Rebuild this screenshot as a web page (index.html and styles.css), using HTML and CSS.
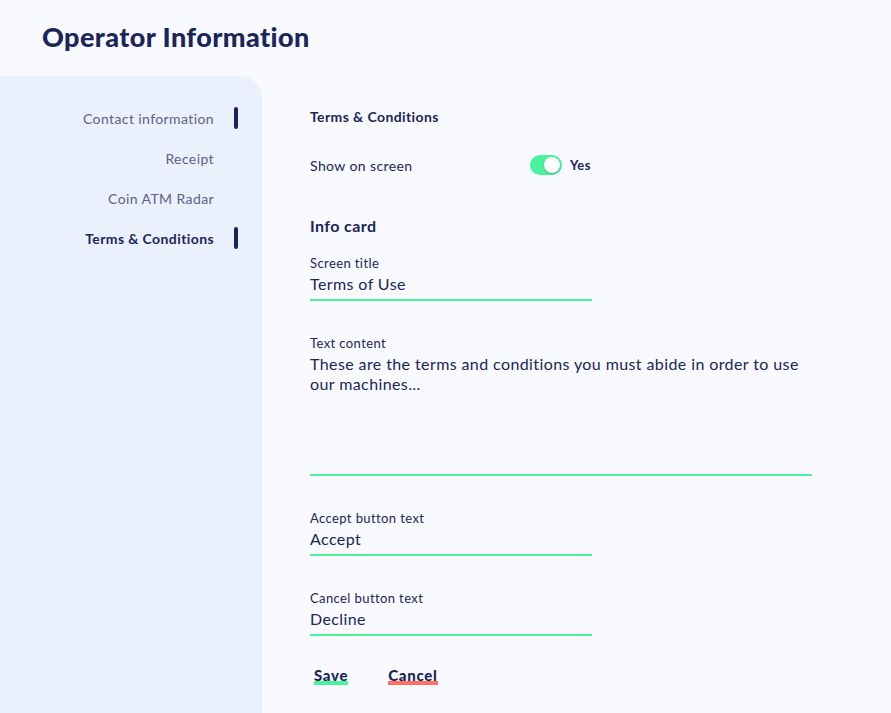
FILE: index.html
```html
<!DOCTYPE html>
<html>
<head>
<meta charset="utf-8">
<link rel="stylesheet" href="styles.css">
</head>
<body>
<div class="page">
  <h1 class="title">Operator Information</h1>
  <div class="main">
    <nav class="sidebar">
      <div class="nav-item"><span>Contact information</span><i class="bar"></i></div>
      <div class="nav-item"><span>Receipt</span><i class="bar off"></i></div>
      <div class="nav-item"><span>Coin ATM Radar</span><i class="bar off"></i></div>
      <div class="nav-item active"><span>Terms &amp; Conditions</span><i class="bar"></i></div>
    </nav>
    <section class="content">
      <h2 class="section-title">Terms &amp; Conditions</h2>
      <div class="switch-row">
        <span class="switch-label">Show on screen</span>
        <span class="toggle"><span class="knob"></span></span>
        <span class="yes">Yes</span>
      </div>
      <h3 class="card-title">Info card</h3>
      <div class="field">
        <div class="label">Screen title</div>
        <div class="value">Terms of Use</div>
      </div>
      <div class="field wide">
        <div class="label">Text content</div>
        <div class="value area">These are the terms and conditions you must abide in order to use our machines...</div>
      </div>
      <div class="field">
        <div class="label">Accept button text</div>
        <div class="value">Accept</div>
      </div>
      <div class="field">
        <div class="label">Cancel button text</div>
        <div class="value">Decline</div>
      </div>
      <div class="actions">
        <span class="btn save">Save</span>
        <span class="btn cancel">Cancel</span>
      </div>
    </section>
  </div>
</div>
</body>
</html>
```
FILE: styles.css
```css
* { box-sizing: border-box; }
html, body { margin: 0; padding: 0; height: 100%; }
body {
  background: #f8faff;
  font-family: Lato, "Noto Sans", sans-serif;
  color: #1b2559;
  letter-spacing: 0.4px;
}
.page { display: flex; flex-direction: column; height: 713px; overflow: hidden; }
.title {
  margin: 0;
  padding: 23px 0 0 42px;
  height: 76px;
  font-size: 27px;
  font-weight: 900;
  letter-spacing: 0.4px;
  line-height: 28px;
  color: #1b2559;
}
.main { display: flex; flex: 1; }
.sidebar {
  width: 262px;
  background: #ebf0fd;
  border-top-right-radius: 22px;
  padding-top: 31px;
  display: flex;
  flex-direction: column;
  gap: 18px;
}
.nav-item {
  display: flex;
  justify-content: flex-end;
  align-items: center;
  gap: 20px;
  padding-right: 24px;
  height: 22px;
  font-size: 14px;
  color: #5b6288;
}
.nav-item.active { font-weight: 700; color: #1b2559; }
.bar { display: block; width: 4px; height: 22px; border-radius: 2px; background: #1b2559; }
.bar.off { background: transparent; }
.content { padding: 32px 0 0 48px; flex: 1; }
.section-title { margin: 0; font-size: 14px; font-weight: 700; line-height: 18px; }
.switch-row { display: flex; align-items: center; margin-top: 29px; height: 20px; font-size: 14px; }
.switch-label { width: 220px; }
.toggle {
  width: 32px; height: 20px; border-radius: 10px; background: #48f39c;
  display: flex; align-items: center; justify-content: flex-end; padding-right: 2px;
}
.knob { width: 16px; height: 16px; border-radius: 50%; background: #fff; box-shadow: 0 1px 2px rgba(0,0,0,0.25); }
.yes { margin-left: 8px; font-weight: 700; font-size: 13px; }
.card-title { margin: 41px 0 0; font-size: 16px; font-weight: 700; line-height: 20px; }
.field { width: 282px; margin-top: 19px; }
.field + .field { margin-top: 34px; }
.field.wide { width: 502px; }
.label { font-size: 13px; line-height: 16px; }
.value {
  font-size: 16px; line-height: 20px; padding-top: 3px; padding-bottom: 5px;
  border-bottom: 2px solid #48f39c;
}
.value.area { height: 125px; }
.actions { display: flex; gap: 40px; margin-top: 31px; padding-left: 4px; }
.btn { font-weight: 900; font-size: 15px; letter-spacing: 0.7px; line-height: 16px; position: relative; z-index: 0; }
.btn::after {
  content: ""; position: absolute; left: 0; right: 0; bottom: -2px; height: 4px; z-index: -1;
}
.save::after { background: #48f39c; }
.cancel::after { background: #ff7262; }
```
